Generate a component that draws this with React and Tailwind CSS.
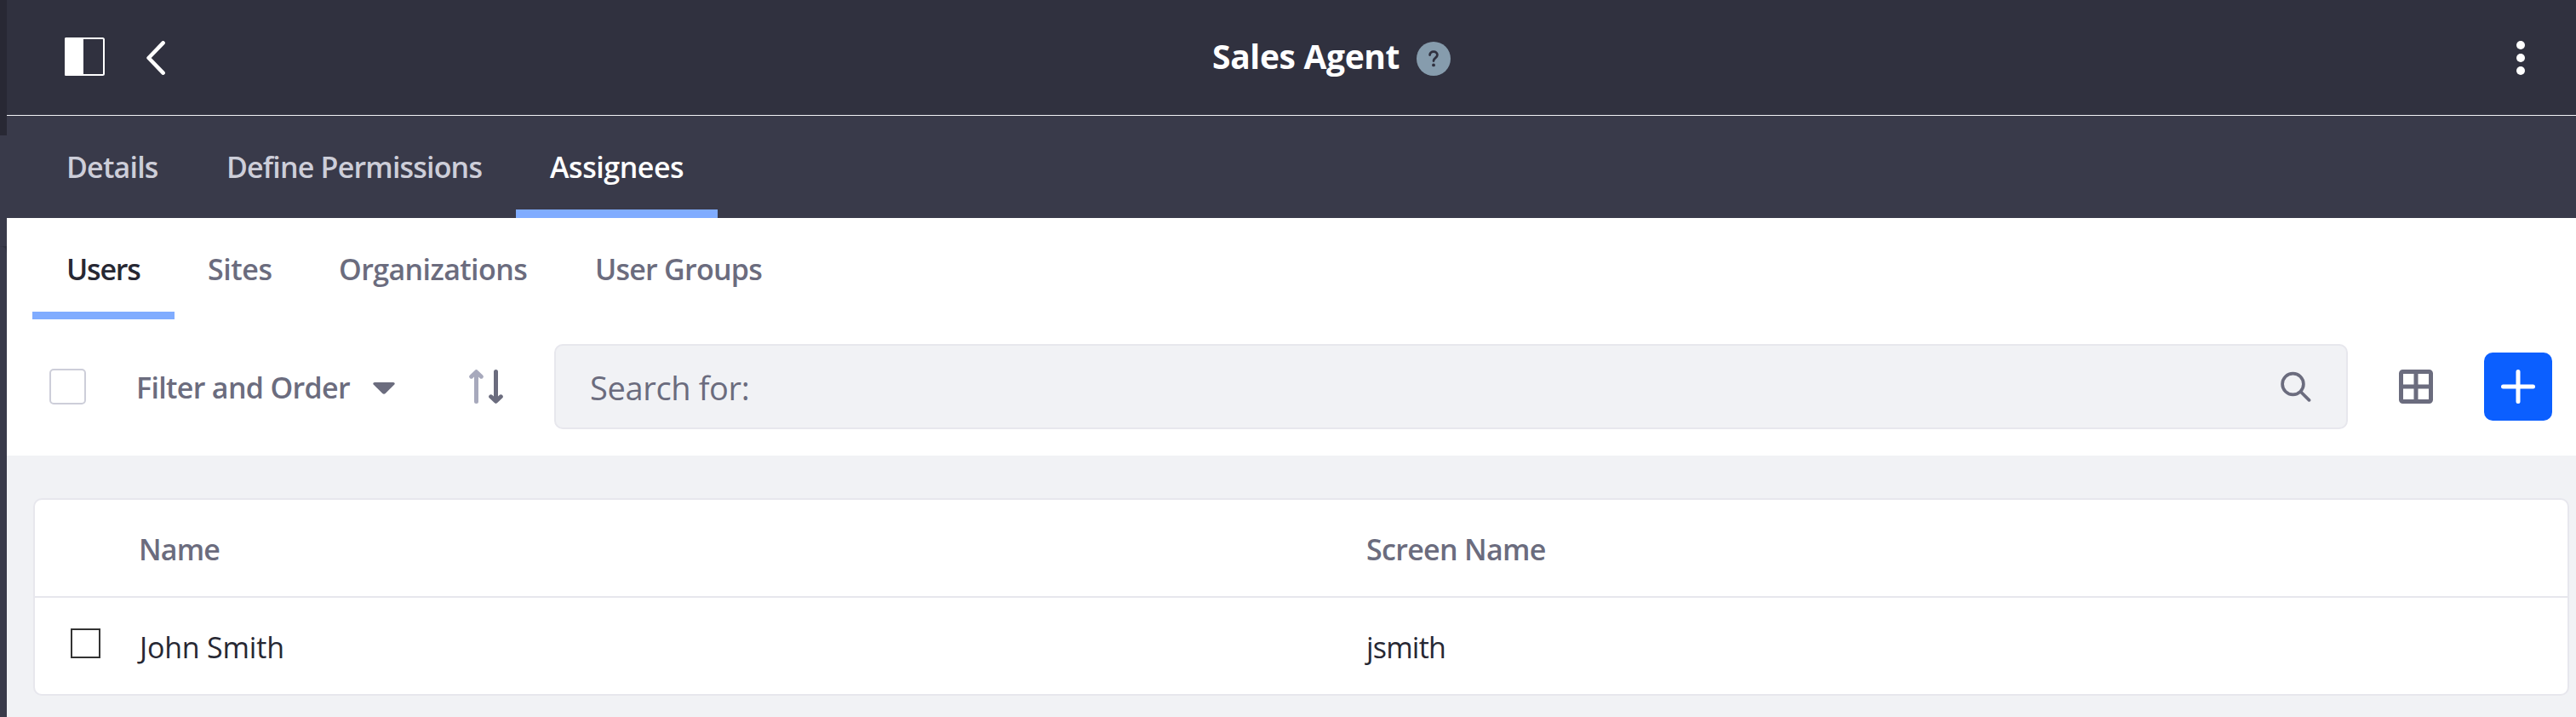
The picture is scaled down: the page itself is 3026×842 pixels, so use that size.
import React from "react";

function Sidebar() {
  return (
    <div className="flex w-2 shrink-0 flex-col bg-[#30313f]">
      <div className="h-[159px] bg-[#282834]" />
      <div className="h-[130px] bg-[#393a4a]" />
      <div className="grow rounded-tr-[8px] bg-[#393a4a]" />
    </div>
  );
}

function Header() {
  return (
    <header className="grid h-[136px] grid-cols-[1416px_1fr_auto] items-center border-b border-[#f1f2f5] bg-[#30313f]">
      <div className="flex items-center pl-[68px]">
        <svg className="-mt-[2px] h-[45px] w-[47px]" viewBox="0 0 47 45" fill="none">
          <rect x="1" y="1" width="45" height="43" rx="1.5" stroke="#fff" strokeWidth="2" />
          <rect x="0" y="0" width="22" height="45" rx="1.5" fill="#fff" />
        </svg>
        <svg className="mt-[1px] ml-[49px] h-10 w-[22px]" viewBox="0 0 22 40" fill="none">
          <path d="M19.6 2.4 2.6 20l17 17.6" stroke="#fff" strokeWidth="4.6" strokeLinecap="round" strokeLinejoin="round" />
        </svg>
      </div>
      <div className="flex items-center">
        <h1 className="-mt-[3px] w-[240px] text-[39px] leading-[60px] font-bold tracking-[-0.35px] whitespace-nowrap text-white">Sales Agent</h1>
        <span className="mt-[3px] flex size-10 items-center justify-center rounded-full bg-[#869cad]">
          <svg className="h-5 w-3" viewBox="0 0 12 20" fill="none">
            <path d="M1.6 5.6C1.6 3.2 3.5 1.6 6 1.6s4.4 1.6 4.4 4c0 3.3-4.4 3.2-4.4 6.9" stroke="#30313f" strokeWidth="2.8" strokeLinecap="round" />
            <circle cx="6" cy="17.4" r="1.9" fill="#30313f" />
          </svg>
        </span>
      </div>
      <div className="mt-[1px] flex flex-col gap-[5px] pr-[60px]">
        <span className="size-2.5 rounded-full bg-white" />
        <span className="size-2.5 rounded-full bg-white" />
        <span className="size-2.5 rounded-full bg-white" />
      </div>
    </header>
  );
}

function PrimaryTabs() {
  return (
    <nav className="flex h-[120px] bg-[#393a4a] pl-[28px] text-[#cdced9]">
      <a className="flex w-[190px] items-center pl-[42px] tracking-[-0.8px]">Details</a>
      <a className="flex w-[380px] items-center pl-10 tracking-[-0.82px]">Define Permissions</a>
      <a className="flex w-[237px] items-center border-b-[10px] border-[#80acff] pt-[10px] pl-[40px] tracking-[-0.45px] text-white">Assignees</a>
    </nav>
  );
}

function SecondaryTabs() {
  return (
    <nav className="flex h-[119px] bg-white pl-[30px] text-[#6b6c7e]">
      <a className="flex w-[167px] items-center border-b-[9px] border-[#80acff] pt-[10px] pl-[40px] tracking-[-1.2px] text-[#272833]">Users</a>
      <a className="flex w-[154px] items-center pt-[1px] pl-[39px] tracking-[-0.45px]">Sites</a>
      <a className="flex w-[300px] items-center pt-[1px] pl-[39px] tracking-[-0.6px]">Organizations</a>
      <a className="flex items-center pt-[1px] pl-[40px] tracking-[-0.76px]">User Groups</a>
    </nav>
  );
}

function Toolbar() {
  return (
    <div className="flex h-[160px] items-center bg-white pr-[28px] pb-[2px] pl-[50px] text-[#6b6c7e]">
      <span className="h-[42px] w-[43px] rounded-[5px] border-2 border-[#cdced9] bg-white" />
      <span className="ml-[59px] w-[278px] pt-[2px] tracking-[-0.68px]">Filter and Order</span>
      <svg className="mt-1 h-[14px] w-[26px]" viewBox="0 0 26 14">
        <path d="M2 0h22q2.6 0.6 1.3 2.6L15 12.8q-2 1.8-4 0L0.7 2.6Q-0.6 0.6 2 0Z" fill="#6b6c7e" />
      </svg>
      <svg className="ml-[87px] h-10 w-10" viewBox="0 0 40 40" fill="none" strokeWidth="5" strokeLinecap="round" strokeLinejoin="round">
        <path d="M8.5 4v33.5M2.7 8.2 8.5 2.7l5.8 5.5" stroke="#a7a9bc" />
        <path d="M8.5 0.6 4 5v3h9V5Z" fill="#a7a9bc" />
        <path d="M31.5 2.5V36M25.7 31.8l5.8 5.5 5.8-5.5" stroke="#6b6c7e" />
        <path d="M31.5 39.4 27 35v-3h9v3Z" fill="#6b6c7e" />
      </svg>
      <div className="ml-[60px] flex h-[100px] grow items-center justify-between rounded-[10px] border-2 border-[#e7e7ed] bg-[#f1f2f5] pr-[41px] pl-[40px]">
        <span className="pt-[2px] text-[38px] font-normal tracking-[-0.36px]">Search for:</span>
        <svg className="h-9 w-9" viewBox="0 0 36 36" fill="none" stroke="#6b6c7e" strokeWidth="3.7" strokeLinecap="round">
          <circle cx="14.5" cy="15" r="12.4" />
          <path d="m23.8 24.2 9.7 9.7" />
        </svg>
      </div>
      <svg className="ml-[60px] size-10" viewBox="0 0 40 40" fill="none" stroke="#6b6c7e" strokeWidth="5">
        <rect x="2.5" y="2.5" width="35" height="35" rx="2" />
        <path d="M20 2.5v35M2.5 20h35" />
      </svg>
      <button className="ml-[60px] flex size-20 items-center justify-center rounded-[10px] bg-[#0b5fff]">
        <svg className="size-10" viewBox="0 0 40 40" stroke="#fff" strokeWidth="5" strokeLinecap="round">
          <path d="M20 2.5v35M2.5 20h35" />
        </svg>
      </button>
    </div>
  );
}

function UsersTable() {
  return (
    <main className="grow bg-[#f1f2f5] pt-[50px] pr-[8px] pl-[31px]">
      <div className="h-[232px] rounded-[10px] border-2 border-[#e7e7ed] bg-white">
        <div className="grid h-[115px] grid-cols-[122px_1442px_1fr] items-center border-b-2 border-[#e7e7ed] pt-[2px] text-[#6b6c7e]">
          <span />
          <span className="tracking-[-0.85px]">Name</span>
          <span className="tracking-[-0.7px]">Screen Name</span>
        </div>
        <div className="grid h-[113px] grid-cols-[42px_79px_1443px_1fr] items-center font-normal text-[#272833]">
          <span />
          <span className="-mt-[6px] size-[35px] border-2 border-[#333333] bg-white" />
          <span className="pt-[3px] pl-[2px] tracking-[-0.2px]">John Smith</span>
          <span className="pt-[3px] tracking-[-0.8px]">jsmith</span>
        </div>
      </div>
    </main>
  );
}

export default function App() {
  return (
    <div className="flex h-[842px] w-full overflow-hidden bg-white font-['Open_Sans','Noto_Sans',sans-serif] text-[34px] leading-[48px] font-semibold whitespace-nowrap">
      <Sidebar />
      <div className="flex min-w-0 grow flex-col">
        <Header />
        <PrimaryTabs />
        <SecondaryTabs />
        <Toolbar />
        <UsersTable />
      </div>
    </div>
  );
}
